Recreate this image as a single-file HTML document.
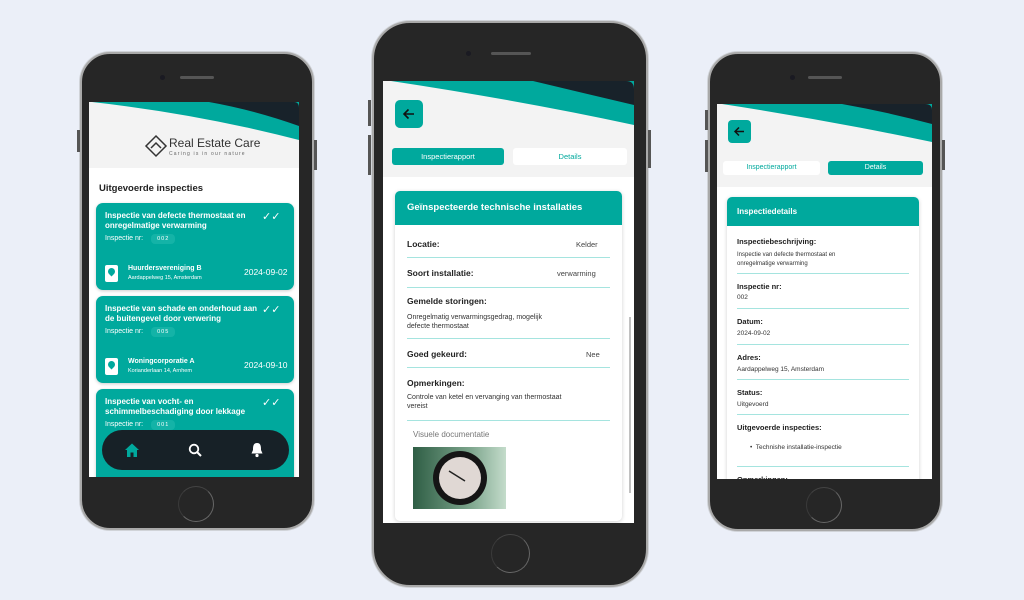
<!DOCTYPE html>
<html><head><meta charset="utf-8"><style>
*{margin:0;padding:0;box-sizing:border-box}
body{width:1024px;height:600px;background:#ebeff8;position:relative;overflow:hidden;font-family:"Liberation Sans",sans-serif}
.ph{position:absolute;background:#262626;border:2px solid #a9a9a9;box-shadow:0 0 0 1px #d0d3d8}
.scr{position:absolute;background:#fff;overflow:hidden}
.a{position:absolute;white-space:nowrap}
.cam{position:absolute;width:5px;height:5px;border-radius:50%;background:#1a1a22}
.spk{position:absolute;height:3px;border-radius:2px;background:#555}
.home{position:absolute;border-radius:50%;border:1.5px solid #666;border-left-color:#3a3a3a;border-top-color:#444}
.btn{position:absolute;background:#555;width:3px}
.card{position:absolute;background:#00a99d;border-radius:7px;color:#fff;box-shadow:0 1px 3px rgba(0,0,0,.2)}
.t{font-weight:bold;font-size:8px;line-height:10px}
.nr{font-size:7px}
.pill{display:inline-block;background:#14b3a7;border-radius:4px;font-size:5.5px;padding:2px 6px;margin-left:6px;letter-spacing:1px}
.pin{position:absolute;width:13px;height:17px;background:#fff;border-radius:2px}
.pin:after{content:"";position:absolute;left:3px;top:3px;width:7px;height:7px;border-radius:50% 50% 50% 0;transform:rotate(-45deg);background:#00a99d}
.lbl{font-weight:bold;color:#222}
.ln{position:absolute;height:1px;background:#a5e4df}
</style></head><body>

<!-- LEFT PHONE -->
<div class="ph" style="left:80px;top:52px;width:234px;height:478px;border-radius:30px"></div>
<div class="btn" style="left:77px;top:130px;height:22px"></div>
<div class="btn" style="left:314px;top:140px;height:30px"></div>
<div class="cam" style="left:160px;top:75px"></div>
<div class="spk" style="left:180px;top:76px;width:34px"></div>
<div class="home" style="left:178px;top:486px;width:36px;height:36px"></div>
<div class="scr" style="left:89px;top:102px;width:210px;height:375px">
 <svg class="a" style="left:0;top:0" width="210" height="66"><rect width="210" height="66" fill="#f3f3f3"/><path d="M3,0 H210 V38 Q110,12 3,0Z" fill="#00a99d"/><path d="M120,0 H205 Q210,0 210,6 V24 Q165,8 120,0Z" fill="#18222a"/></svg>
 <svg class="a" style="left:55px;top:32px" width="24" height="24"><path d="M12,2 L22,12 L12,22 L2,12Z M7,14 L12,9 L17,14" fill="none" stroke="#333" stroke-width="1.5"/></svg>
 <div class="a" style="left:80px;top:34px;font-size:12px;color:#333">Real Estate Care</div>
 <div class="a" style="left:80px;top:49px;font-size:5px;color:#666;letter-spacing:1.2px">Caring is in our nature</div>
 <div class="a" style="left:10px;top:81px;font-size:9.5px;font-weight:bold;color:#222">Uitgevoerde inspecties</div>

 <div class="card" style="left:7px;top:101px;width:198px;height:87px">
  <div class="a t" style="left:9px;top:8px">Inspectie van defecte thermostaat en<br>onregelmatige verwarming</div>
  <div class="a nr" style="left:9px;top:31px">Inspectie nr: <span class="pill">002</span></div>
  <div class="a" style="left:166px;top:7px;font-size:11px">✓✓</div>
  <div class="pin" style="left:9px;top:62px"></div>
  <div class="a t" style="left:32px;top:61px;font-size:7px">Huurdersvereniging B</div>
  <div class="a" style="left:32px;top:72px;font-size:5.5px">Aardappelweg 15, Amsterdam</div>
  <div class="a" style="left:148px;top:64px;font-size:8.5px">2024-09-02</div>
 </div>
 <div class="card" style="left:7px;top:194px;width:198px;height:87px">
  <div class="a t" style="left:9px;top:8px">Inspectie van schade en onderhoud aan<br>de buitengevel door verwering</div>
  <div class="a nr" style="left:9px;top:31px">Inspectie nr: <span class="pill">005</span></div>
  <div class="a" style="left:166px;top:7px;font-size:11px">✓✓</div>
  <div class="pin" style="left:9px;top:62px"></div>
  <div class="a t" style="left:32px;top:61px;font-size:7px">Woningcorporatie A</div>
  <div class="a" style="left:32px;top:72px;font-size:5.5px">Korianderlaan 14, Arnhem</div>
  <div class="a" style="left:148px;top:64px;font-size:8.5px">2024-09-10</div>
 </div>
 <div class="card" style="left:7px;top:287px;width:198px;height:100px">
  <div class="a t" style="left:9px;top:8px">Inspectie van vocht- en<br>schimmelbeschadiging door lekkage</div>
  <div class="a nr" style="left:9px;top:31px">Inspectie nr: <span class="pill">001</span></div>
  <div class="a" style="left:166px;top:7px;font-size:11px">✓✓</div>
 </div>
 <div class="a" style="left:13px;top:328px;width:187px;height:40px;background:#172127;border-radius:20px"></div>
 <svg class="a" style="left:35px;top:340px" width="16" height="16"><path d="M1,8 L8,1.5 L15,8 H13 V15 H9.5 V10.5 H6.5 V15 H3 V8Z" fill="#00a99d"/></svg>
 <svg class="a" style="left:99px;top:341px" width="14" height="14"><circle cx="6" cy="6" r="4.3" fill="none" stroke="#fff" stroke-width="1.8"/><path d="M9,9 L13,13" stroke="#fff" stroke-width="2"/></svg>
 <svg class="a" style="left:161px;top:340px" width="14" height="16"><path d="M7,1 C3,1 3,5 3,8 L1.5,11.5 H12.5 L11,8 C11,5 11,1 7,1Z" fill="#fff"/><circle cx="7" cy="13.5" r="1.6" fill="#fff"/></svg>
</div>

<!-- MIDDLE PHONE -->
<div class="ph" style="left:372px;top:21px;width:276px;height:566px;border-radius:38px"></div>
<div class="btn" style="left:368px;top:100px;height:26px"></div>
<div class="btn" style="left:368px;top:135px;height:40px"></div>
<div class="btn" style="left:648px;top:130px;height:38px"></div>
<div class="cam" style="left:466px;top:51px"></div>
<div class="spk" style="left:491px;top:52px;width:40px"></div>
<div class="home" style="left:491px;top:534px;width:39px;height:39px"></div>
<div class="scr" style="left:383px;top:81px;width:251px;height:442px">
 <svg class="a" style="left:0;top:0" width="251" height="96"><rect width="251" height="96" fill="#f3f3f3"/><path d="M8,0 H251 V44 Q140,20 8,0Z" fill="#00a99d"/><path d="M150,0 H243 Q251,0 251,8 V24 Q200,12 150,0Z" fill="#18222a"/></svg>
 <div class="a" style="left:12px;top:19px;width:28px;height:28px;background:#00a99d;border-radius:5px"></div>
 <svg class="a" style="left:19px;top:26px" width="14" height="14"><path d="M12,7 H2 M6.5,2.5 L2,7 L6.5,11.5" fill="none" stroke="#111" stroke-width="1.6"/></svg>
 <div class="a" style="left:9px;top:67px;width:112px;height:17px;background:#00a99d;border-radius:3px;color:#fff;font-size:7.5px;text-align:center;line-height:17px">Inspectierapport</div>
 <div class="a" style="left:130px;top:67px;width:114px;height:17px;background:#fff;border-radius:3px;color:#00a99d;font-size:7.5px;text-align:center;line-height:17px">Details</div>
 <div class="a" style="left:12px;top:110px;width:227px;height:330px;background:#fff;border-radius:5px;box-shadow:0 1px 4px rgba(0,0,0,.18)"></div>
 <div class="a" style="left:12px;top:110px;width:227px;height:34px;background:#00a99d;border-radius:5px 5px 0 0;color:#fff;font-weight:bold;font-size:9.5px;line-height:34px;padding-left:12px">Geïnspecteerde technische installaties</div>
 <div class="a lbl" style="left:24px;top:158px;font-size:8.5px">Locatie:</div>
 <div class="a" style="left:193px;top:159px;font-size:7.5px;color:#444">Kelder</div>
 <div class="ln" style="left:24px;top:176px;width:203px"></div>
 <div class="a lbl" style="left:24px;top:187px;font-size:8.5px">Soort installatie:</div>
 <div class="a" style="left:174px;top:188px;font-size:7.5px;color:#444">verwarming</div>
 <div class="ln" style="left:24px;top:206px;width:203px"></div>
 <div class="a lbl" style="left:24px;top:215px;font-size:8.5px">Gemelde storingen:</div>
 <div class="a" style="left:24px;top:232px;font-size:7px;color:#333;line-height:9px">Onregelmatig verwarmingsgedrag, mogelijk<br>defecte thermostaat</div>
 <div class="ln" style="left:24px;top:257px;width:203px"></div>
 <div class="a lbl" style="left:24px;top:268px;font-size:8.5px">Goed gekeurd:</div>
 <div class="a" style="left:203px;top:269px;font-size:7.5px;color:#444">Nee</div>
 <div class="ln" style="left:24px;top:286px;width:203px"></div>
 <div class="a lbl" style="left:24px;top:297px;font-size:8.5px">Opmerkingen:</div>
 <div class="a" style="left:24px;top:312px;font-size:7px;color:#333;line-height:9px">Controle van ketel en vervanging van thermostaat<br>vereist</div>
 <div class="ln" style="left:24px;top:339px;width:203px"></div>
 <div class="a" style="left:30px;top:349px;font-size:8px;color:#777">Visuele documentatie</div>
 <svg class="a" style="left:30px;top:366px" width="93" height="62"><defs><linearGradient id="g" x1="0" x2="1"><stop offset="0" stop-color="#2f5e45"/><stop offset=".6" stop-color="#7aa38a"/><stop offset="1" stop-color="#c4dccb"/></linearGradient></defs><rect width="93" height="62" fill="url(#g)"/><circle cx="47" cy="31" r="27" fill="#151515"/><circle cx="47" cy="31" r="21" fill="#e0d8d4"/><path d="M36,24 L52,34" stroke="#222" stroke-width="1.5"/></svg>
 <div class="a" style="left:246px;top:236px;width:2px;height:176px;background:#c1c1c1"></div>
</div>

<!-- RIGHT PHONE -->
<div class="ph" style="left:708px;top:52px;width:234px;height:479px;border-radius:30px"></div>
<div class="btn" style="left:705px;top:110px;height:20px"></div>
<div class="btn" style="left:705px;top:140px;height:32px"></div>
<div class="btn" style="left:942px;top:140px;height:30px"></div>
<div class="cam" style="left:790px;top:75px"></div>
<div class="spk" style="left:808px;top:76px;width:34px"></div>
<div class="home" style="left:806px;top:487px;width:36px;height:36px"></div>
<div class="scr" style="left:717px;top:104px;width:215px;height:375px">
 <svg class="a" style="left:0;top:0" width="215" height="83"><rect width="215" height="83" fill="#f3f3f3"/><path d="M5,0 H215 V38 Q110,16 5,0Z" fill="#00a99d"/><path d="M125,0 H208 Q215,0 215,6 V20 Q170,8 125,0Z" fill="#18222a"/></svg>
 <div class="a" style="left:11px;top:16px;width:23px;height:23px;background:#00a99d;border-radius:4px"></div>
 <svg class="a" style="left:16px;top:21px" width="13" height="13"><path d="M11,6.5 H2 M6,2.5 L2,6.5 L6,10.5" fill="none" stroke="#111" stroke-width="1.5"/></svg>
 <div class="a" style="left:6px;top:57px;width:97px;height:14px;background:#fff;border-radius:3px;color:#00a99d;font-size:7px;text-align:center;line-height:14px">Inspectierapport</div>
 <div class="a" style="left:111px;top:57px;width:95px;height:14px;background:#00a99d;border-radius:3px;color:#fff;font-size:7px;text-align:center;line-height:14px">Details</div>
 <div class="a" style="left:10px;top:93px;width:192px;height:290px;background:#fff;border-radius:5px;box-shadow:0 1px 4px rgba(0,0,0,.18)"></div>
 <div class="a" style="left:10px;top:93px;width:192px;height:29px;background:#00a99d;border-radius:5px 5px 0 0;color:#fff;font-weight:bold;font-size:8px;line-height:29px;padding-left:10px">Inspectiedetails</div>
 <div class="a lbl" style="left:20px;top:133px;font-size:7.5px">Inspectiebeschrijving:</div>
 <div class="a" style="left:20px;top:147px;font-size:6px;color:#333;line-height:9px">Inspectie van defecte thermostaat en<br>onregelmatige verwarming</div>
 <div class="ln" style="left:20px;top:169px;width:172px"></div>
 <div class="a lbl" style="left:20px;top:178px;font-size:7.5px">Inspectie nr:</div>
 <div class="a" style="left:20px;top:190px;font-size:6.5px;color:#333">002</div>
 <div class="ln" style="left:20px;top:204px;width:172px"></div>
 <div class="a lbl" style="left:20px;top:213px;font-size:7.5px">Datum:</div>
 <div class="a" style="left:20px;top:226px;font-size:6.5px;color:#333">2024-09-02</div>
 <div class="ln" style="left:20px;top:240px;width:172px"></div>
 <div class="a lbl" style="left:20px;top:249px;font-size:7.5px">Adres:</div>
 <div class="a" style="left:20px;top:262px;font-size:6.5px;color:#333">Aardappelweg 15, Amsterdam</div>
 <div class="ln" style="left:20px;top:275px;width:172px"></div>
 <div class="a lbl" style="left:20px;top:284px;font-size:7.5px">Status:</div>
 <div class="a" style="left:20px;top:297px;font-size:6.5px;color:#333">Uitgevoerd</div>
 <div class="ln" style="left:20px;top:310px;width:172px"></div>
 <div class="a lbl" style="left:20px;top:319px;font-size:7.5px">Uitgevoerde inspecties:</div>
 <div class="a" style="left:33px;top:340px;font-size:6.5px;color:#333">•&nbsp; Technishe installatie-inspectie</div>
 <div class="ln" style="left:20px;top:362px;width:172px"></div>
 <div class="a lbl" style="left:20px;top:371px;font-size:7.5px">Opmerkingen:</div>
</div>
</body></html>
